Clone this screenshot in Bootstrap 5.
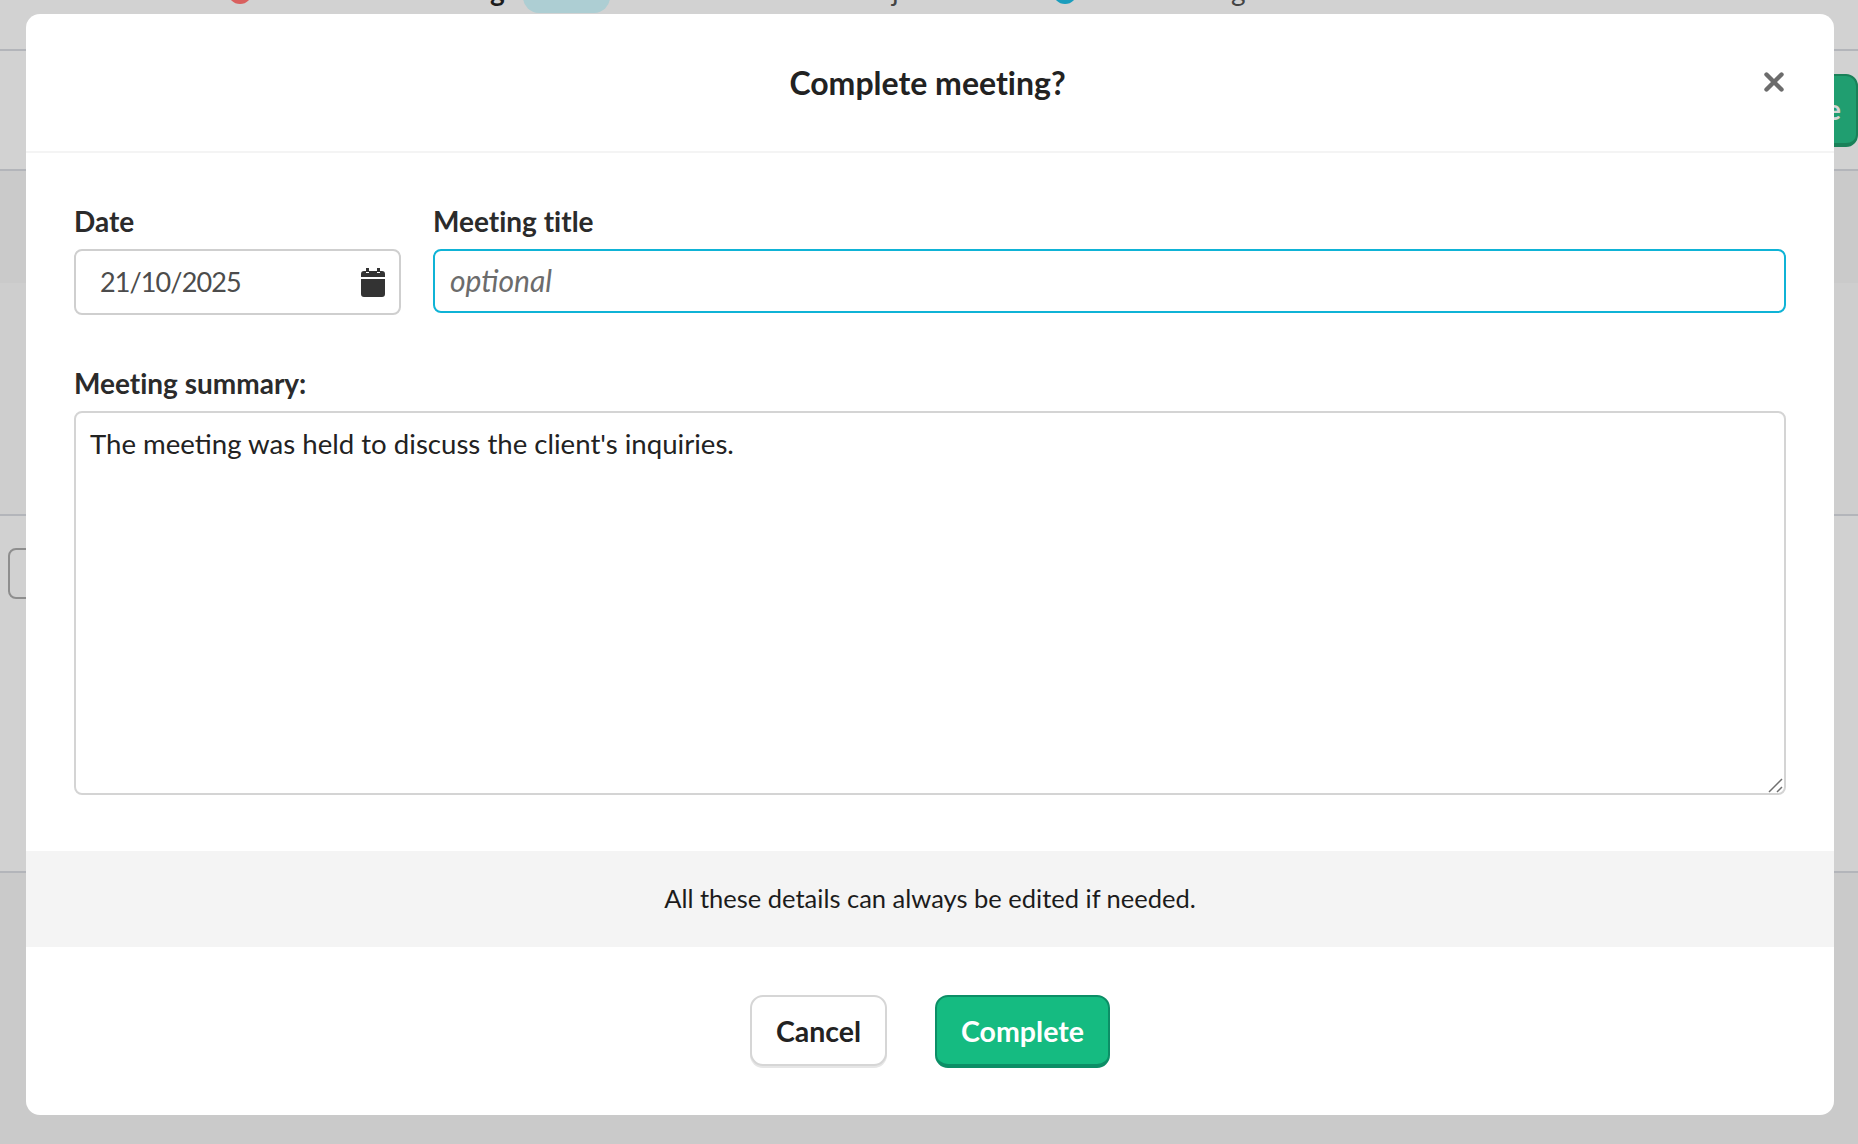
<!DOCTYPE html>
<html lang="en">
<head>
<meta charset="utf-8">
<title>Complete meeting?</title>
<link href="https://cdn.jsdelivr.net/npm/bootstrap@5.3.0/dist/css/bootstrap.min.css" rel="stylesheet">
<style>
html,body{height:100%;overflow:hidden}
body{font-family:Lato,"Liberation Sans",sans-serif;color:#222;background:#fff;font-variant-ligatures:none}
.page-under{height:1144px;overflow:hidden;position:relative;background:#cacaca}
.band{border-bottom:2px solid #b3b5ba;background:#d2d2d2}
.band-a{height:51px}
.band-b{height:120px}
.band-c{height:112px;background:#cacaca;border-bottom:0}
.band-d{height:233px;background:#cecece}
.band-e{height:357px;padding-top:32px;background:#d1d1d1}
.ghost-box{width:60px;height:51px;margin-left:8px;border:2px solid #8e8e8e;border-radius:8px}
.ghost-t{font-size:26px;line-height:30px;margin:94px 0 0 -13px;color:#222}
.tabs-under{position:absolute;top:0;left:0;width:100%;height:14px}
.dot,.pill,.ghost-g{position:absolute}
.dot{width:24px;height:24px;border-radius:50%;top:-20px}
.dot-red{left:228px;background:#d9605f}
.dot-blue{left:1053px;background:#1b9dbd}
.pill{left:523px;top:-20px;width:87px;height:33px;border-radius:16px;background:#adced3}
.ghost-g{top:-27px;font-size:28px;line-height:34px}
.g-a{left:490px;font-weight:700;color:#1c1c1c}
.g-b{left:892px;color:#444}
.g-c{left:1231px;color:#444}
.green-under{position:absolute;left:1700px;top:74px;width:158px;height:73px;background:#209e70;border:2px solid #1a8159;border-bottom-width:4px;border-radius:12px;color:#d5d5d5;font-weight:700;font-size:28px;line-height:66px;text-align:right;padding-right:15px;overflow:hidden}
.dialog{position:absolute;left:26px;top:14px;width:1808px;height:1101px;background:#fff;border-radius:14px;overflow:hidden}
.dlg-head{height:139px;border-bottom:2px solid #f4f4f4;position:relative}
.dlg-title{font-size:32px;font-weight:700;line-height:1;margin:0;padding-right:5px;color:#222}
.x-btn{position:absolute;right:50px;top:58px;width:20px;height:20px;padding:0;background:none;border:0;line-height:0}
.dlg-body{padding:51px 48px 0;height:698px}
.fld-label{font-size:28px;font-weight:700;line-height:34px;margin:0 0 11px;color:#2b2b2b}
.date-col{width:327px;flex:none}
.top-fields{gap:32px}
.date-wrap{height:66px;border:2px solid #cfcfcf;border-radius:8px;padding:0 14px 0 24px;font-size:27px;letter-spacing:-.9px;color:#4c4c4c}
.title-in.form-control{height:64px;border:2px solid #0fb3d6;border-radius:8px;font-size:28px;padding:0 15px;color:#333;box-shadow:none}
.title-in::placeholder{font-style:italic;color:#6c6c6c;opacity:1;font-size:30px}
.sum-gap{margin-top:51px}
.sum-wrap{position:relative}
.summary.form-control{height:384px;border:2px solid #d4d4d4;border-radius:8px;font-size:27.6px;line-height:34px;padding:14px 14px;color:#222;resize:none;box-shadow:none}
.grip{position:absolute;right:3px;bottom:2px;width:15px;height:15px;pointer-events:none}
.hint-strip{height:96px;padding-bottom:2px;background:#f4f4f4;font-size:25.5px;color:#1c1c1c}
.dlg-foot{padding-top:48px;gap:48px}
.act{border-radius:13px;font-size:28.5px;font-weight:700;line-height:1;padding:2px 0 0}
.act-cancel{width:137px;height:71px;background:#fff;border:2px solid #d6d6d6;box-shadow:0 2px 0 #e6e6e6;color:#222}
.act-done{width:175px;height:73px;background:#15bb81;border:2px solid #0c8e66;border-bottom-width:4px;color:#fff}
</style>
</head>
<body>
<div class="page-under">
  <div class="band band-a"></div>
  <div class="band band-b"></div>
  <div class="band band-c"></div>
  <div class="band band-d"></div>
  <div class="band band-e"><div class="ghost-box"></div><div class="ghost-t">t</div></div>
  <div class="tabs-under"><span class="dot dot-red"></span><span class="ghost-g g-a">g</span><span class="pill"></span><span class="ghost-g g-b">j</span><span class="dot dot-blue"></span><span class="ghost-g g-c">g</span></div>
  <div class="green-under">e</div>
</div>
<div class="dialog d-flex flex-column" role="dialog">
  <div class="dlg-head d-flex align-items-center justify-content-center">
    <h5 class="dlg-title">Complete meeting?</h5>
    <button class="x-btn" type="button" aria-label="Close"><svg width="20" height="20" viewBox="0 0 20 20"><path d="M2.5 2.5 17.5 17.5M17.5 2.5 2.5 17.5" stroke="#6c6c6c" stroke-width="4.4" stroke-linecap="round"/></svg></button>
  </div>
  <div class="dlg-body">
    <div class="d-flex top-fields">
      <div class="date-col">
        <label class="fld-label d-block">Date</label>
        <div class="date-wrap d-flex align-items-center justify-content-between">
          <span>21/10/2025</span>
          <svg width="24" height="29" viewBox="0 0 24 29"><path fill="#333" d="M5 0h3v4H5zM16 0h3v4h-3zM3 3h2v2h3V3h8v2h3V3h2a3 3 0 0 1 3 3v3H0V6a3 3 0 0 1 3-3zM0 11h24v15a3 3 0 0 1-3 3H3a3 3 0 0 1-3-3z"/></svg>
        </div>
      </div>
      <div class="flex-grow-1">
        <label class="fld-label d-block" for="mt">Meeting title</label>
        <input id="mt" class="form-control title-in" type="text" placeholder="optional">
      </div>
    </div>
    <label class="fld-label d-block sum-gap" for="ms">Meeting summary:</label>
    <div class="sum-wrap">
      <textarea id="ms" class="form-control summary">The meeting was held to discuss the client's inquiries.</textarea>
      <svg class="grip" viewBox="0 0 15 15"><path d="M1 14 14 1M9 14l5-5" stroke="#6f6f6f" stroke-width="1.5"/></svg>
    </div>
  </div>
  <div class="hint-strip d-flex align-items-center justify-content-center">All these details can always be edited if needed.</div>
  <div class="dlg-foot d-flex justify-content-center align-items-start">
    <button type="button" class="btn act act-cancel">Cancel</button>
    <button type="button" class="btn act act-done">Complete</button>
  </div>
</div>
<script src="https://cdn.jsdelivr.net/npm/bootstrap@5.3.0/dist/js/bootstrap.bundle.min.js"></script>
</body>
</html>
